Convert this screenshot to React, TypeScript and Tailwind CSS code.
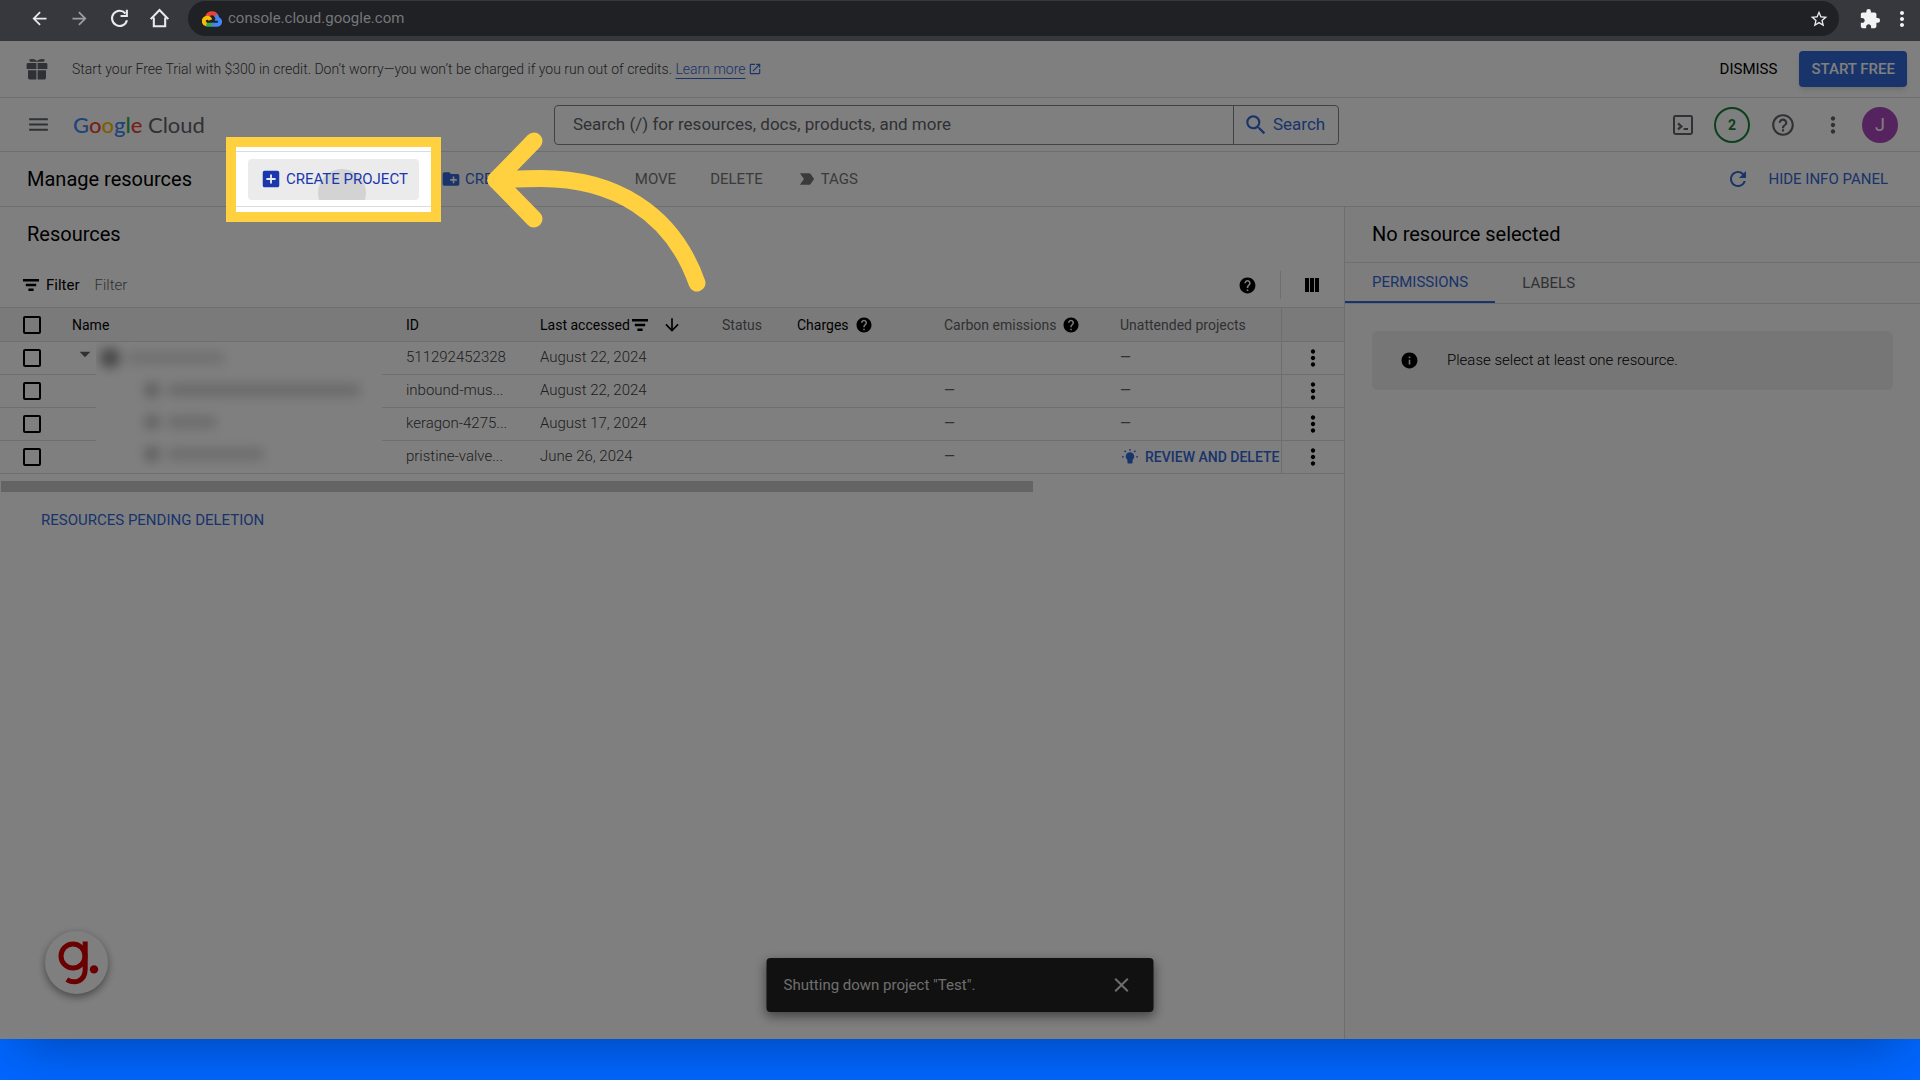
import React from 'react';
import { clsx } from 'clsx';
import {
  MdAddBox,
  MdArrowBack,
  MdArrowDownward,
  MdArrowDropDown,
  MdArrowForward,
  MdClose,
  MdCreateNewFolder,
  MdExtension,
  MdHelp,
  MdHelpOutline,
  MdInfo,
  MdLabelImportant,
  MdMenu,
  MdMoreVert,
  MdOpenInNew,
  MdRefresh,
  MdSearch,
  MdStarBorder,
} from 'react-icons/md';

interface ResourceRow {
  id: string;
  lastAccessed: string;
  carbon: string;
  unattended: string;
  review?: boolean;
}

const rows: ResourceRow[] = [
  { id: '511292452328', lastAccessed: 'August 22, 2024', carbon: '', unattended: '—' },
  { id: 'inbound-mus...', lastAccessed: 'August 22, 2024', carbon: '—', unattended: '—' },
  { id: 'keragon-4275...', lastAccessed: 'August 17, 2024', carbon: '—', unattended: '—' },
  { id: 'pristine-valve...', lastAccessed: 'June 26, 2024', carbon: '—', unattended: '', review: true },
];

// Redacted resource names, one bar per row of the tree
const redacted = [
  { indent: 'pl-1', icon: 'size-5 bg-[#8a8a8a]', bar: 'w-24 bg-[#dedede]' },
  { indent: 'pl-12', icon: 'size-4 bg-[#bdbdbd]', bar: 'w-48 bg-[#d2d2d2]' },
  { indent: 'pl-12', icon: 'size-4 bg-[#c4c4c4]', bar: 'w-12 bg-[#d6d6d6]' },
  { indent: 'pl-12', icon: 'size-4 bg-[#bdbdbd]', bar: 'w-24 bg-[#d8d8d8]' },
];

const CloudLogo: React.FC = () => (
  <svg viewBox="0 0 20 16" className="w-5 h-4" fill="none" strokeWidth="4">
    <path d="M5.2 5.4A5.1 5.1 0 0 1 14.6 5.2" stroke="#ea4335" />
    <path d="M13.6 4.2C15 5.4 15.4 6.6 15.2 7.8A3 3 0 0 1 15 13.8H10" stroke="#4285f4" />
    <path d="M10.4 13.8H5.4L3.6 13" stroke="#34a853" />
    <path d="M4.4 13.4A3.4 3.4 0 1 1 8.4 9" stroke="#fbbc04" />
  </svg>
);

const ReloadIcon: React.FC = () => (
  <svg viewBox="0 0 20 20" className="size-[21px]" fill="none" stroke="#e8eaed" strokeWidth="2">
    <path d="M15.6 5.2A7.2 7.2 0 1 0 17.1 11.6" />
    <path d="M17 1.6V7.6H11" />
  </svg>
);

const HomeIcon: React.FC = () => (
  <svg viewBox="0 0 20 20" className="size-[21px]" fill="none" stroke="#e8eaed" strokeWidth="2">
    <path d="M1.6 10.6L10 2L18.4 10.6M4.6 9V17.4H15.4V9" />
  </svg>
);

const GiftIcon: React.FC = () => (
  <svg viewBox="0 0 22 22" className="size-[22px] shrink-0" fill="#5f6368">
    <path d="M3 1.6C6 .2 9 1 11 3C13 1 16 .2 19 1.6L17.8 3.8H4.2Z" />
    <path d="M2 5H10.4V11H.6V6.4A1.4 1.4 0 0 1 2 5ZM11.6 5H20A1.4 1.4 0 0 1 21.4 6.4V11H11.6Z" />
    <path d="M2 12.2H10.4V21.4H3.6A1.6 1.6 0 0 1 2 19.8ZM11.6 12.2H20V19.8A1.6 1.6 0 0 1 18.4 21.4H11.6Z" />
  </svg>
);

const ShellIcon: React.FC = () => (
  <svg viewBox="0 0 22 22" className="size-[22px]" fill="none" stroke="#5f6368" strokeWidth="2">
    <rect x="2" y="2" width="18" height="18" rx="1.4" />
    <path d="M6 9.4L9.4 12.4L6 15.4M11.6 15H16" strokeWidth="2.2" />
  </svg>
);

const FilterIcon: React.FC<{ className?: string }> = ({ className }) => (
  <svg viewBox="0 0 16 12" className={clsx('w-4 h-3 shrink-0', className)}>
    <path d="M0 0H16V2.4H0ZM2.800 4.800H13.200V7.200H2.800ZM5.400 9.600H10.600V12H5.400Z" />
  </svg>
);

const ColumnsIcon: React.FC = () => (
  <svg viewBox="0 0 14 14" className="size-[14px]">
    <path d="M0 0H4V14H0ZM5 0H9V14H5ZM10 0H14V14H10Z" />
  </svg>
);

const BulbIcon: React.FC = () => (
  <svg viewBox="0 0 16 16" className="size-4 shrink-0" fill="currentColor">
    <path d="M8 3.2A4.2 4.2 0 0 1 10.6 10.7V13.6A1 1 0 0 1 9.6 14.6H6.4A1 1 0 0 1 5.4 13.6V10.7A4.2 4.2 0 0 1 8 3.2Z" />
    <path d="M7.3 0H8.7V1.8H7.3ZM0 7.2H1.8V8.6H0ZM14.2 7.2H16V8.6H14.2ZM2 2.2L3 1.2L4.4 2.6L3.4 3.6ZM14 2.2L13 1.2L11.6 2.6L12.6 3.6Z" />
  </svg>
);

const Checkbox: React.FC<{ label: string }> = ({ label }) => (
  <input
    type="checkbox"
    aria-label={label}
    className="block size-[18px] ml-[23px] appearance-none rounded-xs border-2 border-black"
  />
);

const BrowserBar: React.FC = () => (
  <div className="flex items-center h-[41px] pb-1 pl-[29px] pr-[6px] bg-[#37383d]">
    <div className="flex items-center gap-[19px]">
      <button aria-label="Back"><MdArrowBack className="size-[21px] text-[#e8eaed]" /></button>
      <button aria-label="Forward"><MdArrowForward className="size-[21px] text-[#9a9da1]" /></button>
      <button aria-label="Reload"><ReloadIcon /></button>
      <button aria-label="Home"><HomeIcon /></button>
    </div>
    <div className="flex flex-1 items-center h-[35px] ml-[18px] mr-5 pl-[14px] pr-[10px] rounded-full bg-[#202124]">
      <CloudLogo />
      <input
        aria-label="Address"
        defaultValue="console.cloud.google.com"
        className="flex-1 ml-[6px] bg-transparent text-[15px] text-[#75777b] outline-none"
      />
      <button aria-label="Bookmark"><MdStarBorder className="size-5 text-[#e8eaed]" /></button>
    </div>
    <button aria-label="Extensions" className="mr-[9px]"><MdExtension className="size-[22px] text-[#f1f3f4]" /></button>
    <button aria-label="Menu"><MdMoreVert className="size-6 text-[#f1f3f4]" /></button>
  </div>
);

const TrialBanner: React.FC = () => (
  <div className="flex items-center h-[57px] pl-[26px] pr-[13px] border-b border-[#dadce0]">
    <GiftIcon />
    <p className="flex-1 ml-6 text-sm font-light text-[#3c4043]">
      Start your Free Trial with $300 in credit. Don’t worry—you won’t be charged if you run out of credits.{' '}
      <a href="#" className="inline-flex items-center gap-[2px] text-[#3367d6]">
        <span className="underline underline-offset-4">Learn more</span>
        <MdOpenInNew className="size-[14px]" />
      </a>
    </p>
    <button className="px-[22px] text-[15px] text-black">DISMISS</button>
    <button className="h-9 px-3 rounded-sm bg-[#3367d6] text-[15px] font-medium text-white shadow-md">
      START FREE
    </button>
  </div>
);

const Header: React.FC = () => (
  <header className="grid grid-cols-[528px_1fr_559px] items-center h-[54px] pl-[26px] pr-[22px] border-b border-[#dadce0]">
    <div className="flex items-center">
      <button aria-label="Navigation menu"><MdMenu className="size-[25px] text-[#5f6368]" /></button>
      <a href="#" className="ml-[22px] font-[Lato] text-[22px] leading-7 text-[#5f6368]">
        <span className="font-medium">
          <span className="text-[#4285f4]">G</span>
          <span className="text-[#ea4335]">o</span>
          <span className="text-[#fbbc04]">o</span>
          <span className="text-[#4285f4]">g</span>
          <span className="text-[#34a853]">l</span>
          <span className="text-[#ea4335]">e</span>
        </span>{' '}
        Cloud
      </a>
    </div>
    <form className="flex h-10 rounded-sm border border-[#80868b]">
      <input
        aria-label="Search"
        placeholder="Search (/) for resources, docs, products, and more"
        className="flex-1 pl-[18px] text-[17px] outline-none placeholder:text-[#5f6368]"
      />
      <button type="button" className="flex items-center w-[105px] pl-[9px] gap-1 border-l border-[#80868b] text-[17px] text-[#3367d6]">
        <MdSearch className="size-[26px]" />
        Search
      </button>
    </form>
    <div className="flex items-center justify-end text-[#5f6368]">
      <button aria-label="Cloud Shell"><ShellIcon /></button>
      <button className="size-9 ml-5 mr-5 rounded-full border-2 border-[#188038] text-sm font-bold text-[#188038]">2</button>
      <button aria-label="Help"><MdHelpOutline className="size-[26px]" /></button>
      <button aria-label="More" className="ml-6 mr-4"><MdMoreVert className="size-[26px]" /></button>
      <button className="size-9 rounded-full bg-[#ab47bc] text-lg text-white">J</button>
    </div>
  </header>
);

// Yellow frame; its spread shadow dims everything else inside the page
const Spotlight: React.FC = () => (
  <span className="absolute -inset-[22px] z-20 pointer-events-none border-[10px] border-[#ffd140] shadow-[0_0_0_4000px_rgba(0,0,0,0.5)]">
    <svg
      viewBox="0 0 232 170"
      className="absolute left-[249px] -top-[17px] w-[232px] h-[170px]"
      fill="none"
      stroke="#ffd140"
      strokeWidth="17"
      strokeLinecap="round"
      strokeLinejoin="round"
    >
      <path d="M49 11L11 50L49 89" />
      <path d="M11 50C30 49 42 48.500 56 48.500C128 48.500 187 82 212 153" />
    </svg>
  </span>
);

const Toolbar: React.FC = () => (
  <div className="flex items-center h-[55px] pl-[27px] pr-8 border-b border-[#dadce0] text-[15px] text-[#757575]">
    <h1 className="text-xl text-black">Manage resources</h1>
    <div className="relative ml-14 h-[41px]">
      <button className="relative flex items-center h-full pl-3 pr-[11px] gap-1 overflow-hidden rounded-sm bg-[#ebebeb] text-[#1a37ad]">
        <span className="absolute left-[70px] top-[10px] size-12 rounded-full bg-[#d3d3d3]" />
        <MdAddBox className="relative size-[22px]" />
        <span className="relative">CREATE PROJECT</span>
      </button>
      <Spotlight />
    </div>
    <button className="flex items-center ml-[22px] gap-1 text-[#3367d6]">
      <MdCreateNewFolder className="size-5" />
      CREATE FOLDER
    </button>
    <div className="flex items-center ml-[58px] gap-[34px]">
      <button>MOVE</button>
      <button>DELETE</button>
      <button className="flex items-center gap-1">
        <MdLabelImportant className="size-5" />
        TAGS
      </button>
    </div>
    <button aria-label="Refresh" className="ml-auto"><MdRefresh className="size-6 text-[#3367d6]" /></button>
    <button className="ml-[18px] text-[#3367d6]">HIDE INFO PANEL</button>
  </div>
);

const ResourceTable: React.FC = () => (
  <table className="w-full table-fixed border-t border-[#dadce0] text-left text-[15px] text-[#5f6368]">
    <colgroup>
      <col className="w-12" />
      <col className="w-12" />
      <col />
      <col className="w-[134px]" />
      <col className="w-[182px]" />
      <col className="w-[75px]" />
      <col className="w-[147px]" />
      <col className="w-[176px]" />
      <col className="w-[185px]" />
      <col className="w-[63px]" />
    </colgroup>
    <thead className="text-sm">
      <tr className="h-[34px] border-b border-[#dadce0] bg-[#f5f5f5] [&>th]:font-normal [&>th]:whitespace-nowrap">
        <th><Checkbox label="Select all" /></th>
        <th colSpan={2} className="pl-6 text-black">Name</th>
        <th className="pl-6 text-black">ID</th>
        <th className="pl-6 text-black">
          <span className="flex items-center">
            Last accessed
            <FilterIcon className="ml-[2px]" />
            <MdArrowDownward className="size-5 ml-[14px]" />
          </span>
        </th>
        <th className="pl-6">Status</th>
        <th className="pl-6 text-black">
          <span className="flex items-center gap-[6px]">
            Charges
            <MdHelp className="size-[18px]" />
          </span>
        </th>
        <th className="pl-6">
          <span className="flex items-center gap-[6px]">
            Carbon emissions
            <MdHelp className="size-[18px] text-black" />
          </span>
        </th>
        <th className="pl-6">Unattended projects</th>
        <th className="border-l border-[#dadce0]" aria-label="Actions" />
      </tr>
    </thead>
    <tbody>
      {rows.map((row, index) => (
        <tr key={row.id} className="h-[33px] border-b border-[#dadce0] [&>td]:whitespace-nowrap">
          <td><Checkbox label={`Select ${row.id}`} /></td>
          <td className="pl-6">
            {index === 0 && (
              <button aria-label="Collapse" className="block -mt-2">
                <MdArrowDropDown className="size-[26px]" />
              </button>
            )}
          </td>
          {index === 0 && (
            <td rowSpan={rows.length} className="align-top">
              <div className="flex flex-col overflow-hidden">
                {redacted.map((item, i) => (
                  <div key={i} className={clsx('flex items-center gap-2 h-8 blur-[6px]', item.indent)}>
                    <span className={clsx('rounded-full', item.icon)} />
                    <span className={clsx('h-3', item.bar)} />
                  </div>
                ))}
              </div>
            </td>
          )}
          <td className="pl-6 pb-[2px] font-light text-[#3c4043]">{row.id}</td>
          <td className="pl-6 pb-[2px] font-light text-[#3c4043]">{row.lastAccessed}</td>
          <td />
          <td />
          <td className="pl-6 pb-[2px] text-sm">{row.carbon}</td>
          <td className={clsx('pl-6 text-sm', !row.review && 'pb-[2px]')}>
            {row.review ? (
              <button className="flex items-center pl-[2px] gap-[7px] font-medium text-[#3367d6]">
                <BulbIcon />
                REVIEW AND DELETE
              </button>
            ) : (
              row.unattended
            )}
          </td>
          <td className="border-l border-[#dadce0] text-black">
            <button aria-label="Row actions" className="block mx-auto">
              <MdMoreVert className="size-[26px]" />
            </button>
          </td>
        </tr>
      ))}
    </tbody>
  </table>
);

const InfoPanel: React.FC = () => (
  <aside className="w-[576px] shrink-0 border-l border-[#dadce0] bg-[#fafafa]">
    <h2 className="flex items-center h-14 pl-[27px] pb-[2px] border-b border-[#dadce0] text-xl text-black">
      No resource selected
    </h2>
    <div className="flex h-[41px] border-b border-[#dadce0] text-[15px]">
      <button className="px-[27px] border-b-2 border-[#3367d6] text-[#3367d6]">PERMISSIONS</button>
      <button className="px-[27px] text-[#5f6368]">LABELS</button>
    </div>
    <div className="flex items-center h-[59px] mt-[27px] ml-[27px] mr-[27px] pl-[28px] gap-7 rounded-md bg-[#ececec] text-black">
      <MdInfo className="size-[19px]" />
      <p className="text-[15px] font-light">Please select at least one resource.</p>
    </div>
  </aside>
);

const GuideBadge: React.FC = () => (
  <button
    aria-label="Open guide"
    className="absolute left-[45px] bottom-[45px] size-[63px] rounded-full bg-white shadow-[0_3px_8px_rgba(0,0,0,0.45)]"
  >
    <svg viewBox="0 0 63 63" className="size-full" fill="none" stroke="#d60000" strokeWidth="5">
      <circle cx="28" cy="25" r="12" />
      <path d="M40.200 10.500V38C40.200 50 30 53.500 21.800 48.600" />
      <circle cx="49" cy="38.400" r="4.200" fill="#d60000" stroke="none" />
    </svg>
  </button>
);

const Toast: React.FC = () => (
  <div
    role="status"
    className="absolute left-1/2 bottom-[27px] flex items-center justify-between w-[387px] h-[54px] pl-[17px] pr-5 -translate-x-1/2 rounded-sm bg-[#222] text-[15px] text-[#ddd] shadow-[0_4px_12px_rgba(0,0,0,0.5)]"
  >
    Shutting down project "Test".
    <button aria-label="Dismiss notification"><MdClose className="size-6" /></button>
  </div>
);

export default function App() {
  return (
    <div className="flex flex-col min-h-screen pb-[41px] bg-[#0066ff] font-[Roboto,sans-serif]">
      <div className="flex flex-col flex-1 shadow-[0_25px_50px_-20px_rgba(0,0,0,0.33)]">
        <BrowserBar />
        <div className="relative flex flex-col flex-1 overflow-hidden bg-white">
          <TrialBanner />
          <Header />
          <Toolbar />
          <div className="flex flex-1">
            <main className="flex-1 min-w-0">
              <h2 className="pl-[27px] pt-[13px] text-xl text-black">Resources</h2>
              <div className="flex items-center h-10 mt-[17px] mb-[2px] pl-[23px] pr-[25px]">
                <FilterIcon />
                <label htmlFor="filter" className="ml-[7px] text-[15px] text-black">Filter</label>
                <input
                  id="filter"
                  placeholder="Filter"
                  className="flex-1 ml-[15px] text-[15px] font-light outline-none placeholder:text-[#5f6368]"
                />
                <button aria-label="Filter help"><MdHelp className="size-[19px]" /></button>
                <div className="w-px h-7 ml-[23px] mr-6 bg-[#dadce0]" />
                <button aria-label="Column display"><ColumnsIcon /></button>
              </div>
              <ResourceTable />
              <div className="w-[1032px] max-w-full h-[11px] mt-[7px] ml-px bg-[#c8c8c8]" />
              <button className="block mt-[17px] ml-[41px] text-[15px] text-[#3367d6]">
                RESOURCES PENDING DELETION
              </button>
            </main>
            <InfoPanel />
          </div>
          <GuideBadge />
          <Toast />
        </div>
      </div>
    </div>
  );
}
